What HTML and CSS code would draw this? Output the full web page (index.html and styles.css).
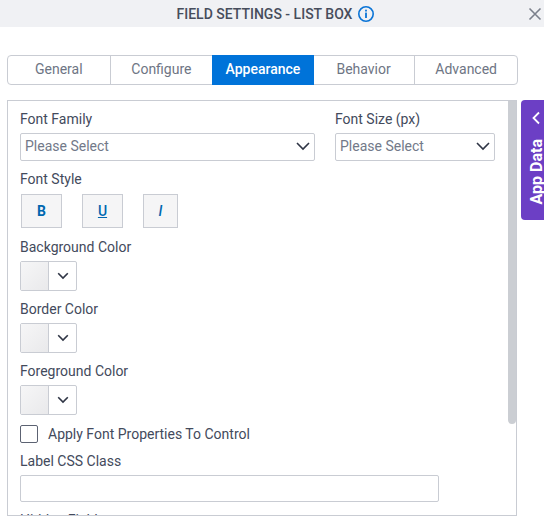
FILE: index.html
```html
<!DOCTYPE html>
<html lang="en">
<head>
  <meta charset="UTF-8" />
  <title>Field Settings - List Box</title>
  <link rel="stylesheet" href="styles.css">
</head>
<body>

  <div class="header">
    <span class="header-title">FIELD SETTINGS - LIST BOX</span>
    <svg class="info-icon" width="18" height="18" viewBox="0 0 18 18">
      <circle cx="9" cy="9" r="7.2" fill="none" stroke="#0a74d6" stroke-width="1.6"/>
      <rect x="8.1" y="7.6" width="1.8" height="5.4" fill="#0a74d6"/>
      <rect x="8.1" y="4.7" width="1.8" height="1.8" fill="#0a74d6"/>
    </svg>
    <svg class="close-icon" width="14" height="14" viewBox="0 0 14 14">
      <path d="M1.5 1.5 L12.5 12.5 M12.5 1.5 L1.5 12.5" stroke="#7b808c" stroke-width="1.6" fill="none"/>
    </svg>
  </div>

  <div class="tabs">
    <div class="tab">General</div>
    <div class="tab">Configure</div>
    <div class="tab active">Appearance</div>
    <div class="tab">Behavior</div>
    <div class="tab">Advanced</div>
  </div>

  <div class="panel">
    <div class="row">
      <div class="field field-family">
        <label class="label">Font Family</label>
        <div class="select">
          <span>Please Select</span>
          <svg class="chevron" width="16" height="10" viewBox="0 0 16 10"><path d="M2 2 L8 8 L14 2" stroke="#2f3545" stroke-width="1.6" fill="none"/></svg>
        </div>
      </div>
      <div class="field field-size">
        <label class="label">Font Size (px)</label>
        <div class="select">
          <span>Please Select</span>
          <svg class="chevron" width="16" height="10" viewBox="0 0 16 10"><path d="M2 2 L8 8 L14 2" stroke="#2f3545" stroke-width="1.6" fill="none"/></svg>
        </div>
      </div>
    </div>

    <label class="label label-style">Font Style</label>
    <div class="style-buttons">
      <div class="style-btn bold">B</div>
      <div class="style-btn underline">U</div>
      <div class="style-btn italic">I</div>
    </div>

    <label class="label label-color">Background Color</label>
    <div class="color-picker">
      <div class="swatch"></div>
      <div class="color-arrow"><svg width="12" height="8" viewBox="0 0 12 8"><path d="M1.2 1.2 L6 6 L10.8 1.2" stroke="#2f3545" stroke-width="1.6" fill="none"/></svg></div>
    </div>

    <label class="label label-color">Border Color</label>
    <div class="color-picker">
      <div class="swatch"></div>
      <div class="color-arrow"><svg width="12" height="8" viewBox="0 0 12 8"><path d="M1.2 1.2 L6 6 L10.8 1.2" stroke="#2f3545" stroke-width="1.6" fill="none"/></svg></div>
    </div>

    <label class="label label-color">Foreground Color</label>
    <div class="color-picker">
      <div class="swatch"></div>
      <div class="color-arrow"><svg width="12" height="8" viewBox="0 0 12 8"><path d="M1.2 1.2 L6 6 L10.8 1.2" stroke="#2f3545" stroke-width="1.6" fill="none"/></svg></div>
    </div>

    <div class="check-row">
      <div class="checkbox"></div>
      <span class="check-label">Apply Font Properties To Control</span>
    </div>

    <label class="label label-css">Label CSS Class</label>
    <div class="text-input"></div>

    <label class="label label-next">Hidden Field</label>

    <div class="scroll-thumb"></div>
  </div>

  <div class="app-data">
    <svg width="10" height="14" viewBox="0 0 10 14"><path d="M8 1.5 L2.5 7 L8 12.5" stroke="#fff" stroke-width="1.8" fill="none"/></svg>
    <span class="app-data-text">App Data</span>
  </div>

</body>
</html>
```

FILE: styles.css
```css
body {
  margin: 0;
  width: 544px;
  height: 528px;
  overflow: hidden;
  position: relative;
  background: #fff;
  font-family: Roboto, sans-serif;
  font-size: 14px;
  color: #434a5c;
}

.header {
  height: 27px;
  background: #f0f1f4;
  display: flex;
  justify-content: center;
  align-items: center;
  gap: 5px;
  position: relative;
  padding-left: 8px;
}

.header-title {
  font-size: 14px;
  font-weight: 500;
  color: #474d5c;
}

.close-icon {
  position: absolute;
  right: 2px;
  top: 7px;
}

.tabs {
  display: flex;
  margin: 28px 0 0 7px;
  width: 511px;
  height: 30px;
  box-sizing: border-box;
  border: 1px solid #c9ccd3;
  border-radius: 4px;
}

.tab {
  flex: 1;
  display: flex;
  justify-content: center;
  align-items: center;
  padding-bottom: 2px;
  color: #6e7584;
  border-right: 1px solid #c9ccd3;
}

.tab:last-child {
  border-right: none;
}

.tab.active {
  background: #0073d9;
  color: #fff;
  font-weight: 500;
  margin: -1px;
  border-right: none;
}

.panel {
  position: relative;
  margin: 15px 0 0 7px;
  width: 510px;
  height: 416px;
  box-sizing: border-box;
  border: 1px solid #c9ccd3;
  padding: 10px 12px 0;
  overflow: hidden;
}

.row {
  display: flex;
  gap: 20px;
}

.field-family {
  width: 295px;
}

.field-size {
  width: 160px;
}

.label {
  display: block;
  line-height: 16px;
  color: #434a5c;
}

.select {
  margin-top: 6px;
  height: 28px;
  box-sizing: border-box;
  border: 1px solid #c9ccd3;
  border-radius: 2px;
  display: flex;
  align-items: center;
  justify-content: space-between;
  padding: 0 3px 2px 4px;
  color: #727989;
}

.label-style {
  margin-top: 10px;
}

.style-buttons {
  display: flex;
  gap: 20px;
  margin: 7px 0 11px 1px;
}

.style-btn {
  width: 41px;
  height: 34px;
  box-sizing: border-box;
  border: 1px solid #c9ccd3;
  background: #f5f5f6;
  display: flex;
  justify-content: center;
  align-items: center;
  color: #0067b0;
  font-weight: 500;
}

.style-btn.bold {
  font-weight: 700;
}

.style-btn.underline {
  text-decoration: underline;
}

.style-btn.italic {
  width: 35px;
  font-style: italic;
}

.label-color {
  margin-top: 10px;
}

.color-picker {
  display: flex;
  width: 57px;
  height: 30px;
  margin-top: 6px;
  box-sizing: border-box;
  border: 1px solid #c9ccd3;
  border-radius: 2px;
}

.swatch {
  width: 27px;
  background: linear-gradient(135deg, #f6f6f7, #e9e9eb);
  border-right: 1px solid #c9ccd3;
}

.color-arrow {
  flex: 1;
  display: flex;
  justify-content: center;
  align-items: center;
}

.check-row {
  display: flex;
  align-items: center;
  gap: 10px;
  margin-top: 10px;
}

.checkbox {
  width: 18px;
  height: 18px;
  box-sizing: border-box;
  border: 1px solid #5c6272;
  border-radius: 2px;
}

.check-label {
  color: #434a5c;
}

.label-css {
  margin-top: 10px;
}

.text-input {
  width: 419px;
  height: 27px;
  margin-top: 6px;
  box-sizing: border-box;
  border: 1px solid #c9ccd3;
  border-radius: 2px;
}

.label-next {
  margin-top: 10px;
}

.scroll-thumb {
  position: absolute;
  top: 0;
  right: 0;
  width: 8px;
  height: 323px;
  background: #cbced3;
  border-radius: 0 0 4px 4px;
}

.app-data {
  position: absolute;
  left: 521px;
  top: 100px;
  width: 23px;
  height: 120px;
  background: #6c3fc5;
  border-radius: 4px 0 0 4px;
  color: #fff;
  display: flex;
  flex-direction: column;
  align-items: center;
  padding: 11px 0 0 7px;
  box-sizing: border-box;
}

.app-data-text {
  writing-mode: vertical-rl;
  transform: rotate(180deg);
  font-weight: 700;
  font-size: 16px;
  margin-top: 14px;
}
```
